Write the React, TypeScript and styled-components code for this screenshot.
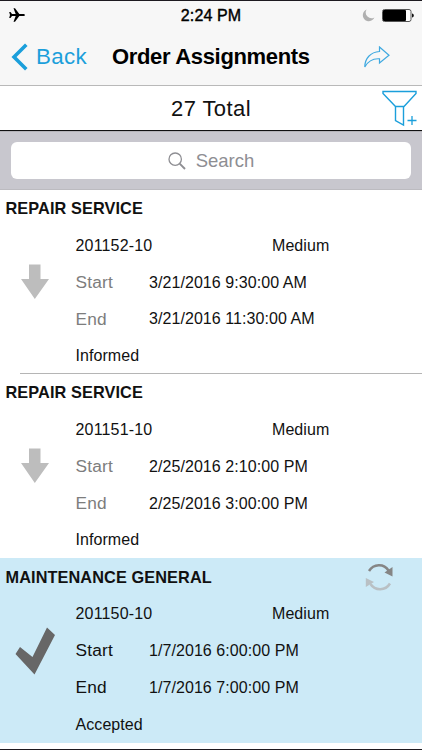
import React from 'react';
import styled, { createGlobalStyle } from 'styled-components';

const blue = '#1b9fdb';

const GlobalStyle = createGlobalStyle`
  * {
    box-sizing: border-box;
  }
  body {
    margin: 0;
    background: #fff;
    color: #111;
    font-family: "Liberation Sans", Arial, sans-serif;
  }
`

const Screen = styled.div`
  width: 422px;
  height: 750px;
  display: flex;
  flex-direction: column;
  overflow: hidden;
  background: #fff;
  border-top: 1px solid #1d1a20;
  border-bottom: 1px solid #1d1a20;
`

const Header = styled.header`
  height: 85px;
  background: #f7f7f7;
  border-bottom: 1px solid #b9b9b9;
`

const StatusBar = styled.div`
  height: 28px;
  display: grid;
  grid-template-columns: 1fr auto 1fr;
  align-items: center;
  padding: 0 8px 0 9px;
`

const Clock = styled.div`
  font-size: 16px;
  color: #000;
  letter-spacing: 0.1px;
  margin-right: 1px;
  padding-top: 1px;
  -webkit-text-stroke: 0.4px #000;
`

const StatusIcons = styled.div`
  display: flex;
  justify-content: flex-end;
  align-items: center;
  gap: 7px;
`

const NavBar = styled.div`
  height: 55px;
  display: grid;
  grid-template-columns: 112px 1fr 58px;
  align-items: center;
`

const BackButton = styled.div`
  display: flex;
  align-items: center;
  gap: 8px;
  padding-left: 11px;
  font-size: 22.3px;
  letter-spacing: 0.35px;
  color: ${blue};
`

const Title = styled.div`
  font-size: 22px;
  font-weight: bold;
  letter-spacing: -0.33px;
  color: #000;
  white-space: nowrap;
`

const TotalBar = styled.div`
  height: 45px;
  display: grid;
  grid-template-columns: 1fr auto 1fr;
  align-items: center;
  border-bottom: 1px solid #111;
`

const Total = styled.div`
  font-size: 22px;
  letter-spacing: 0.4px;
  padding-top: 1px;
`

const FilterButton = styled.div`
  display: flex;
  justify-content: flex-end;
  padding-right: 4px;
`

const SearchBar = styled.div`
  height: 59px;
  padding: 10px 11px 11px;
  background: #c8c7ce;
  border-top: 1px solid #b4b3b8;
  border-bottom: 1px solid #bcbbc0;
`

const SearchField = styled.div`
  height: 37px;
  display: flex;
  align-items: center;
  justify-content: center;
  gap: 10px;
  background: #fff;
  border-radius: 6px;
  font-size: 18.5px;
  color: #8e8e93;
`

const Order = styled.section<{ $selected?: boolean }>`
  height: 184.2px;
  flex: none;
  display: grid;
  grid-template-columns: 75.500px 1fr;
  grid-template-rows: 37.300px 1fr;
  background: ${props => props.$selected ? '#cceaf7' : '#fff'};
`

const OrderHeader = styled.div`
  grid-column: 1 / 3;
  display: flex;
  align-items: center;
  justify-content: space-between;
  padding: 0 28px 0 5.5px;
`

const OrderType = styled.div`
  font-size: 16.3px;
  font-weight: bold;
  color: #111;
  letter-spacing: 0.1px;
`

const StatusIcon = styled.div`
  height: 110px;
  display: flex;
  align-items: center;
  padding-left: 14px;
`

const Details = styled.div`
  display: grid;
  grid-template-columns: 73px 123.5px 1fr;
  grid-template-rows: repeat(4, 36.85px);
  align-items: center;
  font-size: 16px;
  letter-spacing: 0.07px;
  white-space: nowrap;
`

const Id = styled.div`
  grid-column: 1 / 3;
  letter-spacing: 0.17px;
`

const Label = styled.div<{ $dark?: boolean }>`
  font-size: 17.3px;
  letter-spacing: 0.2px;
  color: ${props => props.$dark ? '#111' : '#7d7d7d'};
`

const Value = styled.div`
  grid-column: 2 / 4;
  padding-left: 0.5px;
`

const Status = styled.div`
  grid-column: 1 / 4;
`

const Divider = styled.div`
  height: 1px;
  flex: none;
  margin: -1px 0 0 20px;
  background: #b5b5b5;
  z-index: 1;
`

const orders = [
  { id: '201152-10', type: 'REPAIR SERVICE', priority: 'Medium', start: '3/21/2016 9:30:00 AM', end: '3/21/2016 11:30:00 AM', status: 'Informed' },
  { id: '201151-10', type: 'REPAIR SERVICE', priority: 'Medium', start: '2/25/2016 2:10:00 PM', end: '2/25/2016 3:00:00 PM', status: 'Informed' },
  { id: '201150-10', type: 'MAINTENANCE GENERAL', priority: 'Medium', start: '1/7/2016 6:00:00 PM', end: '1/7/2016 7:00:00 PM', status: 'Accepted' },
];

const Plane = () => (
  <svg width="16" height="14" viewBox="0 0 16 14">
    <path d="M16 7c0-.7-.9-1.1-2-1.1h-3.700L6 .2H4.500l2.200 5.700H3L1.500 4H.2L1 7 .2 10h1.300L3 8.100h3.700L4.500 13.800H6l4.300-5.700H14c1.100 0 2-.4 2-1.100z" fill="#000" />
  </svg>
)

const Moon = () => (
  <svg width="13" height="13" viewBox="0 0 13 13">
    <path d="M4.600.6A6 6 0 1 0 12.400 8.400 5.700 5.700 0 0 1 4.600.6z" fill="#b0b0b0" />
  </svg>
)

const Battery = () => (
  <svg width="32" height="13" viewBox="0 0 32 13">
    <rect x=".5" y=".5" width="28.500" height="12" rx="2" fill="#fff" stroke="#555" />
    <rect x="1" y="1" width="23" height="11" rx="1" fill="#000" />
    <path d="M30 4.500c1.300.3 1.800 1.100 1.800 2s-.5 1.700-1.800 2z" fill="#111" />
  </svg>
)

const Chevron = () => (
  <svg width="17" height="28" viewBox="0 0 17 28">
    <path d="M15.300 1.800L3 14l12.300 12.200" fill="none" stroke={blue} strokeWidth="3.600" />
  </svg>
)

const Share = () => (
  <svg width="28" height="22" viewBox="0 0 28 22">
    <path d="M15.500 1L25 9.300 15.500 17V12.800C9 12.300 4.500 14.300 .8 21 .8 12.500 6.500 6 15.500 5.500z" fill="none" stroke="#3fa9e0" strokeWidth="1.200" />
  </svg>
)

const Filter = () => (
  <svg width="36" height="37" viewBox="0 0 36 37">
    <path d="M1 1.500H34V3.500L22 16.500H13.500L1 3.500zM13.500 16.500V30.500L21.500 35V16.500" fill="none" stroke={blue} strokeWidth="1.400" />
    <path d="M25.500 30.500h9M30 26v9" stroke={blue} strokeWidth="1.300" />
  </svg>
)

const Magnifier = () => (
  <svg width="18" height="18" viewBox="0 0 18 18">
    <circle cx="7.200" cy="7.200" r="6.200" fill="none" stroke="#8e8e93" strokeWidth="1.300" />
    <path d="M11.700 11.700l5.300 5.300" stroke="#8e8e93" strokeWidth="1.900" />
  </svg>
)

const DownArrow = () => (
  <svg width="42" height="36" viewBox="0 0 42 36">
    <path d="M15 .5H26.500V15H35L20.800 35 7 15H15z" fill="#bdbdbd" />
  </svg>
)

const Check = () => (
  <svg width="42" height="48" viewBox="0 0 42 48">
    <path d="M1.500 27L6 20 18.500 30 33 .5 41 8 20.500 47.500z" fill="#676767" />
  </svg>
)

const Sync = () => (
  <svg width="29" height="28" viewBox="0 0 29 28">
    <path d="M4 8C8.500 .5 19 .2 23.500 7.500" fill="none" stroke="#858585" strokeWidth="2.500" />
    <path d="M27.500 4v9.500L19.500 9.500z" fill="#858585" />
    <path d="M25 20.500C20.500 28 10 28 5.500 21" fill="none" stroke="#b9c0c4" strokeWidth="2.500" />
    <path d="M.8 15v9L9 19z" fill="#b9c0c4" />
  </svg>
)

function App() {
  return (
    <Screen>
      <GlobalStyle />
      <Header>
        <StatusBar>
          <Plane />
          <Clock>2:24 PM</Clock>
          <StatusIcons><Moon /><Battery /></StatusIcons>
        </StatusBar>
        <NavBar>
          <BackButton><Chevron />Back</BackButton>
          <Title>Order Assignments</Title>
          <Share />
        </NavBar>
      </Header>
      <TotalBar>
        <div />
        <Total>27 Total</Total>
        <FilterButton><Filter /></FilterButton>
      </TotalBar>
      <SearchBar>
        <SearchField><Magnifier />Search</SearchField>
      </SearchBar>
      {orders.map((order, index) => {
        const accepted = order.status === 'Accepted';
        return <React.Fragment key={order.id}>
          {index === 1 && <Divider />}
          <Order $selected={accepted}>
            <OrderHeader>
              <OrderType>{order.type}</OrderType>
              {accepted && <Sync />}
            </OrderHeader>
            <StatusIcon>{accepted ? <Check /> : <DownArrow />}</StatusIcon>
            <Details>
              <Id>{order.id}</Id>
              <div>{order.priority}</div>
              <Label $dark={accepted}>Start</Label>
              <Value>{order.start}</Value>
              <Label $dark={accepted}>End</Label>
              <Value>{order.end}</Value>
              <Status>{order.status}</Status>
            </Details>
          </Order>
        </React.Fragment>
      })}
    </Screen>
  );
}

export default App;
